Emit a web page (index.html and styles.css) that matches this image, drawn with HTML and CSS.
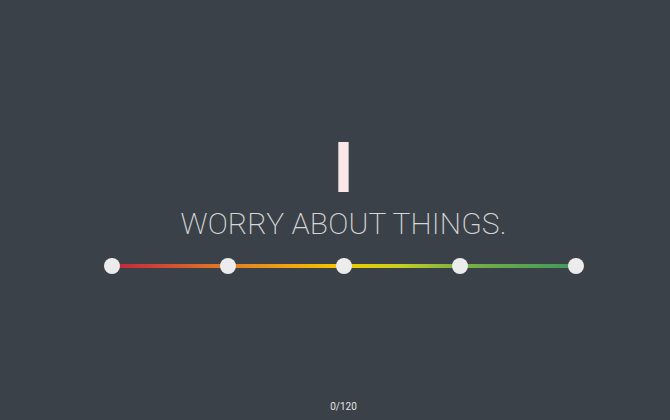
FILE: index.html
```html
<!DOCTYPE html>
<html>
<head>
<meta charset="utf-8">
<link rel="stylesheet" href="styles.css">
</head>
<body>
<main class="screen">
  <section class="question">
    <div class="subject">I</div>
    <div class="statement">WORRY ABOUT THINGS.</div>
    <div class="scale">
      <div class="track"></div>
      <div class="knobs">
        <span class="knob"></span>
        <span class="knob"></span>
        <span class="knob"></span>
        <span class="knob"></span>
        <span class="knob"></span>
      </div>
    </div>
  </section>
  <footer class="counter">0/120</footer>
</main>
</body>
</html>
```
FILE: styles.css
```css
html, body {
  margin: 0;
  padding: 0;
  background: #3b4148;
}
.screen {
  box-sizing: border-box;
  width: 670px;
  height: 420px;
  padding-left: 17px;
  display: flex;
  flex-direction: column;
  align-items: center;
  font-family: Roboto, "Liberation Sans", sans-serif;
  color: #e6e6e6;
}
.question {
  display: flex;
  flex-direction: column;
  align-items: center;
  padding-top: 128px;
}
.subject {
  font-size: 70px;
  font-weight: 700;
  line-height: 80px;
  color: #fbe7e7;
  height: 80px;
}
.statement {
  font-size: 30px;
  font-weight: 200;
  line-height: 36px;
  color: #d6d6d6;
  letter-spacing: 0.1px;
  margin-top: -2px;
}
.scale {
  position: relative;
  width: 480px;
  height: 16px;
  margin-top: 16px;
}
.track {
  position: absolute;
  left: 8px;
  right: 8px;
  top: 6px;
  height: 4px;
  background: linear-gradient(to right, #c2233f 0%, #e37d24 25%, #f6c800 50%, #c6cf21 62%, #7bb142 75%, #3f9a5c 100%);
}
.knobs {
  position: relative;
  display: flex;
  justify-content: space-between;
  width: 100%;
  height: 16px;
}
.knob {
  width: 16px;
  height: 16px;
  border-radius: 50%;
  background: #ececec;
}
.counter {
  margin-top: auto;
  margin-bottom: 8px;
  font-size: 10px;
  font-family: Roboto, "Liberation Sans", sans-serif;
  color: #e4e4e4;
}
```
